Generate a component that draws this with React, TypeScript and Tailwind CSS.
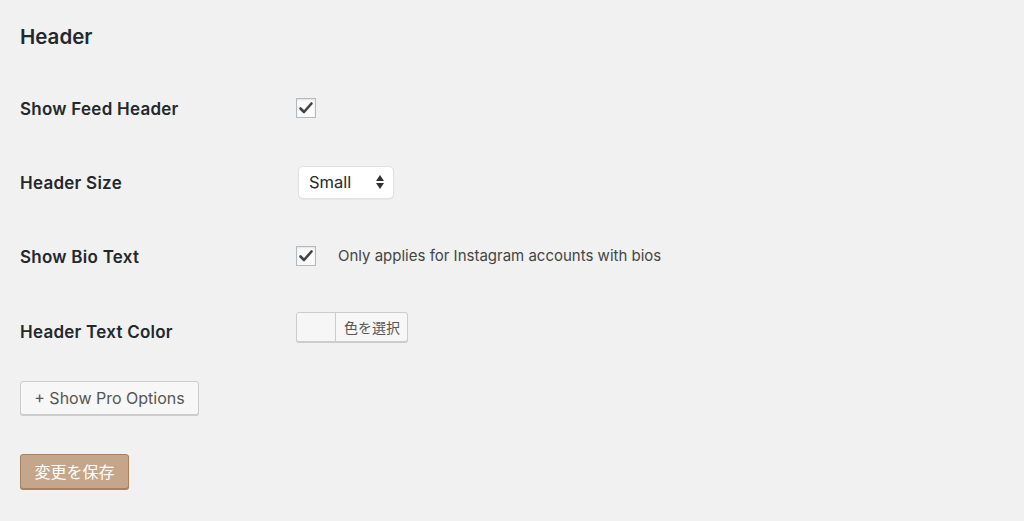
import React from "react";

const font = { fontFamily: 'Inter, "Noto Sans", "Noto Sans CJK JP", sans-serif' };

function Check() {
  return (
    <div className="w-[20px] h-[20px] border border-[#b4b9be] bg-[#fbfbfb] shadow-[inset_0_1px_2px_rgba(0,0,0,0.1)] flex items-center justify-center">
      <svg width="16" height="16" viewBox="0 0 16 16">
        <path d="M2.5 8.5 L6 12 L13.5 3.5" fill="none" stroke="#444" strokeWidth="2.6" strokeLinecap="round" strokeLinejoin="round" />
      </svg>
    </div>
  );
}

export default function App() {
  return (
    <div className="w-[1024px] h-[521px] bg-[#f1f1f1] text-[#23282d] pl-[20px] flex flex-col" style={font}>
      <div className="h-[71px] flex items-start pt-[23px]">
        <h2 className="text-[20.5px] font-semibold leading-[28px]">Header</h2>
      </div>
      <div className="h-[74px] flex items-center">
        <div className="w-[276px] text-[17px] tracking-[0.25px] font-semibold pt-[3px]">Show Feed Header</div>
        <Check />
      </div>
      <div className="h-[74px] flex items-center">
        <div className="w-[278px] text-[17px] tracking-[0.25px] font-semibold pt-[3px]">Header Size</div>
        <div className="w-[96px] h-[33px] bg-white border border-[#e2e2e2] rounded-[5px] flex items-center justify-between pl-[10px] pr-[8px] shadow-[0_1px_1px_rgba(0,0,0,0.04)]">
          <span className="text-[16.5px] text-[#23282d]">Small</span>
          <svg width="10" height="16" viewBox="0 0 10 16">
            <path d="M5 1 L9 7 L1 7 Z" fill="#333" />
            <path d="M5 15 L9 9 L1 9 Z" fill="#333" />
          </svg>
        </div>
      </div>
      <div className="h-[74px] flex items-center">
        <div className="w-[276px] text-[17px] tracking-[0.25px] font-semibold pt-[3px]">Show Bio Text</div>
        <Check />
        <span className="ml-[22px] text-[15px] text-[#444]">Only applies for Instagram accounts with bios</span>
      </div>
      <div className="h-[74px] flex items-start">
        <div className="w-[276px] text-[17px] tracking-[0.25px] font-semibold leading-[24px] mt-[27px]">Header Text Color</div>
        <div className="mt-[19px] flex h-[30px] border border-[#ccc] rounded-[3px] bg-[#f7f7f7] shadow-[0_1px_0_#ccc] overflow-hidden">
          <div className="w-[39px] bg-[#f6f6f6] border-r border-[#ccc]" />
          <div className="pl-[8px] pr-[7px] flex items-center text-[14px] text-[#555]">色を選択</div>
        </div>
      </div>
      <div className="mt-[14px]">
        <button className="h-[34px] w-[179px] border border-[#ccc] rounded-[3px] bg-[#f7f7f7] shadow-[0_1px_0_#ccc] text-[16px] text-[#555] flex items-center justify-center">
          + Show Pro Options
        </button>
      </div>
      <div className="mt-[39px]">
        <button className="h-[35px] w-[109px] border border-[#a97f5c] rounded-[3px] bg-[#c5a68b] shadow-[0_1px_0_#a97f5c] text-[16px] text-white flex items-center justify-center">
          変更を保存
        </button>
      </div>
    </div>
  );
}
